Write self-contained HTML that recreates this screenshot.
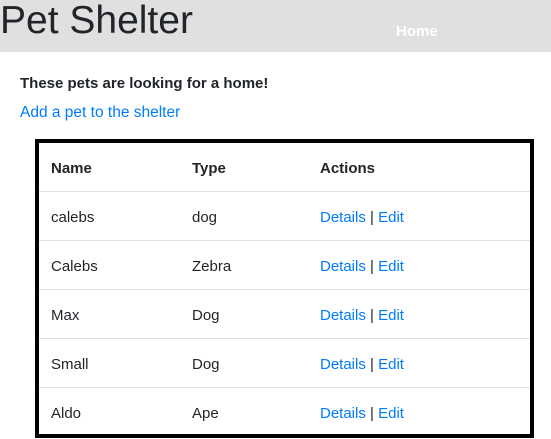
<!DOCTYPE html>
<html><head><style>
body{margin:0;font-family:"Liberation Sans",sans-serif;color:#212529;background:#fff;width:551px;height:439px;overflow:hidden;font-size:15px}
.hdr{height:52px;background:#e0e0e0;position:relative}
.hdr h1{margin:0;position:absolute;left:0;top:-1px;font-size:39px;font-weight:normal;color:#212529}
.hdr .home{position:absolute;left:396px;top:23px;color:#fff;font-weight:bold;font-size:15px}
.p{position:absolute;left:20px;top:75px;font-weight:bold;font-size:15px}
.a{position:absolute;left:20px;top:104px;color:#007bff;font-size:15.5px}
.tbl{position:absolute;left:35px;top:139px;width:491px;height:291px;border:4px solid #000;overflow:hidden}
.row{position:absolute;left:0;width:491px;height:49px;border-top:1px solid #dee2e6}
.row > span{position:absolute;top:17px}
.c1{left:12px}.c2{left:153px}.c3{left:281px}
b{font-weight:bold}
.l{color:#007bff}
</style></head><body>
<div class="hdr"><h1>Pet Shelter</h1><span class="home">Home</span></div>
<div class="p">These pets are looking for a home!</div>
<div class="a">Add a pet to the shelter</div>
<div class="tbl">
<div class="row" style="top:0;border-top:none;height:48px"><span class="c1"><b>Name</b></span><span class="c2"><b>Type</b></span><span class="c3"><b>Actions</b></span></div>
<div class="row" style="top:48px"><span class="c1">calebs</span><span class="c2">dog</span><span class="c3"><span class="l">Details</span> | <span class="l">Edit</span></span></div>
<div class="row" style="top:97px"><span class="c1">Calebs</span><span class="c2">Zebra</span><span class="c3"><span class="l">Details</span> | <span class="l">Edit</span></span></div>
<div class="row" style="top:146px"><span class="c1">Max</span><span class="c2">Dog</span><span class="c3"><span class="l">Details</span> | <span class="l">Edit</span></span></div>
<div class="row" style="top:195px"><span class="c1">Small</span><span class="c2">Dog</span><span class="c3"><span class="l">Details</span> | <span class="l">Edit</span></span></div>
<div class="row" style="top:244px"><span class="c1">Aldo</span><span class="c2">Ape</span><span class="c3"><span class="l">Details</span> | <span class="l">Edit</span></span></div>
</div>
</body></html>
